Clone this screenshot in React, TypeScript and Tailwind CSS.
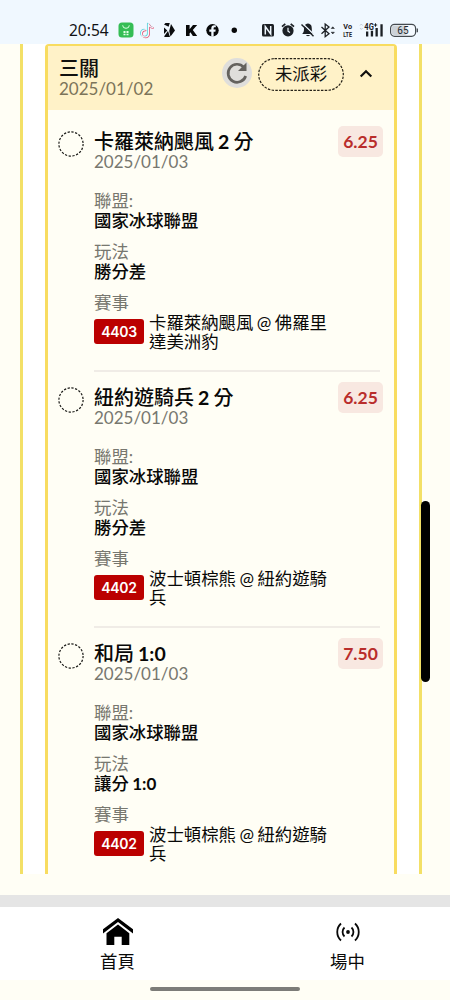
import React from "react";

const cjk = "font-['Lato','Noto_Sans_CJK_TC',sans-serif]";

type Leg = { name: string; figure: string; odds: string; play: string; playFigure?: string; code: string; match: string[] };

const legs: Leg[] = [
  { name: "卡羅萊納颶風", figure: "2", odds: "6.25", play: "勝分差", code: "4403", match: ["卡羅萊納颶風 @ 佛羅里", "達美洲豹"] },
  { name: "紐約遊騎兵", figure: "2", odds: "6.25", play: "勝分差", code: "4402", match: ["波士頓棕熊 @ 紐約遊騎", "兵"] },
  { name: "和局", figure: "1:0", odds: "7.50", play: "讓分", playFigure: "1:0", code: "4402", match: ["波士頓棕熊 @ 紐約遊騎", "兵"] },
];

function StatusIcons() {
  return (
    <svg width="342" height="20" viewBox="108 20 342 20" className="block shrink-0">
      {/* shopping bag app */}
      <rect x="118.5" y="22.5" width="15" height="15" rx="3.5" fill="#35bd55" />
      <path d="M122.7 25.3a3.3 3 0 0 0 6.6 0" fill="none" stroke="#d9ffe0" strokeWidth="1" />
      <path d="M123.5 31h2v2h-2zM126.500 31h2v2h-2zM123.500 33.700h2v1.500h-2zM126.500 33.700h2v1.500h-2z" fill="#e4ffe8" />
      {/* music note app */}
      <g fill="none" strokeWidth="1.500" strokeLinecap="round">
        <path d="M148.500 24v9.500a3.500 3.500 0 1 1-3.500-3.500M148.500 24c.4 2.200 1.800 3.300 4 3.500" stroke="#69d5de" transform="translate(-.8 -.5)" />
        <path d="M148.500 24v9.500a3.500 3.500 0 1 1-3.500-3.500M148.500 24c.4 2.200 1.800 3.300 4 3.500" stroke="#e2607f" transform="translate(.7 .5)" />
        <path d="M148.500 24v9.500a3.500 3.500 0 1 1-3.500-3.500M148.500 24c.4 2.200 1.800 3.300 4 3.500" stroke="#f5faff" strokeWidth="1.200" />
      </g>
      {/* angular mark */}
      <path d="M164 24.500l1.500-1.500h4.300l-1.200 3.700zM164 36.500l4-5.500 2 6h-5zM164 27.500l3.300 3-3.300 3.500zM171 24l4 6.400-4.500 6.100-1.300-5.500z" fill="#0b0d0f" />
      <path d="M186 25h3.600v4.300l3.400-4.300h4.200l-4.400 5.100 4.400 5.900h-4.300l-2.500-3.700-.8.900v2.800H186z" fill="#08090a" />
      <circle cx="212.500" cy="30.300" r="6.200" fill="#08090a" />
      <path d="M211.300 36.800v-5h-2v-2.200h2v-1c0-2.200 1-3.300 3-3.300h1.500v2h-1c-.9 0-1.200.4-1.200 1.200v1.100h2.100l-.3 2.200h-1.800v5z" fill="#f0f8ff" />
      <circle cx="234.300" cy="30.300" r="2.700" fill="#08090a" />
      {/* nfc */}
      <rect x="262" y="24" width="12" height="12.500" rx="1.500" fill="#1c2025" />
      <path d="M265.300 34.500V26.500l5.400 7.500V26" fill="none" stroke="#f0f8ff" strokeWidth="1.500" />
      {/* alarm */}
      <circle cx="288" cy="30.800" r="5.600" fill="#1c2025" />
      <path d="M282 26.700l3.300-2.900M294 26.700l-3.300-2.900" stroke="#1c2025" strokeWidth="1.700" />
      <path d="M288 27.700v3.500l2 1.300" stroke="#f0f8ff" strokeWidth="1.200" fill="none" />
      {/* muted bell */}
      <path d="M308 23.500c-3.500.5-4 3-4 5.500 0 3-.6 3.500-1.800 5h11.300c-1.300-1.500-1.700-2.500-1.700-5 0-3-.5-5-3.800-5.500zM306 35h4c-.5 1.500-3.500 1.500-4 0z" fill="#1c2025" />
      <path d="M302.500 23.500l12 11.500" stroke="#f0f8ff" strokeWidth="1.300" />
      <path d="M301.500 24.500l12 11.800" stroke="#1c2025" strokeWidth="1.400" />
      {/* bluetooth */}
      <path d="M321.500 27l7.500 6.700-3.800 3V24l3.800 3-7.500 6.700" fill="none" stroke="#1c2025" strokeWidth="1.300" />
      <path d="M331.200 28.500l1.600-1.700 1.600 1.700zM331.200 32.200h3.200l-1.600 1.700z" fill="#1c2025" stroke="#1c2025" strokeWidth=".5" />
      <g fill="#1c2025" className="font-['Roboto',sans-serif] font-bold">
        <text x="343.300" y="29" fontSize="7" textLength="8.700" lengthAdjust="spacingAndGlyphs">Vo</text>
        <text x="343.300" y="36.700" fontSize="7" textLength="8.700" lengthAdjust="spacingAndGlyphs">LTE</text>
        <text x="364.300" y="29.500" fontSize="9" textLength="9.500" lengthAdjust="spacingAndGlyphs">4G</text>
      </g>
      <path d="M373.800 25h3.400M375.500 23.300v3.400" stroke="#1c2025" strokeWidth="1" />
      <path d="M360 25.500l1.300-1.500 1.300 1.500M360 28l1.300 1.500 1.300-1.500" fill="none" stroke="#bbc2c8" strokeWidth=".8" />
      <path d="M366 31.500h2.300v5H366zM370.800 30.800h2.300v5.700h-2.300zM375.500 28h2.300v8.500h-2.300zM380.400 24.200h2.300v12.300h-2.300z" fill="#1c2025" />
      {/* battery */}
      <rect x="390.600" y="24.300" width="25" height="12" rx="4" fill="#f5faff" stroke="#444a4f" strokeWidth="1.200" />
      <rect x="391.800" y="25.500" width="15" height="9.600" rx="2.500" fill="#ccd2d8" />
      <path d="M417.300 28.500v3.800" stroke="#444a4f" strokeWidth="1.300" />
      <text x="397.300" y="34" fontSize="10" fill="#252a2e" className="font-['Roboto',sans-serif]">65</text>
    </svg>
  );
}

function DashedCircle() {
  return (
    <svg width="26" height="26" viewBox="0 0 26 26" className="block shrink-0">
      <circle cx="13" cy="13" r="12.100" fill="none" stroke="#1b1b18" strokeWidth="1.200" strokeDasharray="2.3 1.500" />
    </svg>
  );
}

function LegRow({ leg, last }: { leg: Leg; last: boolean }) {
  return (
    <section className="flex h-[256px] shrink-0 pt-4 pl-[10px]">
      <DashedCircle />
      <div className={"ml-[10px] flex h-[241px] w-[286px] flex-col text-[17.4px] leading-5 " + (last ? "" : "border-b-2 border-[#f0ece6]")}>
        <div className="relative flex">
          <h2 className="h-[21px] text-[20px] leading-[21px] font-medium whitespace-nowrap text-[#080807] [word-spacing:-1px]">
            {leg.name} <span className="text-[19.500px] font-bold">{leg.figure}</span>{leg.figure === "2" ? " 分" : ""}
          </h2>
          <span className="absolute -top-[5px] -right-[3px] flex h-[31px] w-[45px] items-center justify-center rounded-[5px] bg-[#f8e8e1] text-[17.500px] font-bold text-[#b92d2b]">{leg.odds}</span>
        </div>
        <p className="text-[17px] text-[#77776f]">2025/01/03</p>
        <p className="mt-[19px] text-[#77776f]">聯盟:</p>
        <p className="font-medium text-[#080807]">國家冰球聯盟</p>
        <p className="mt-[11px] text-[#77776f]">玩法</p>
        <p className="font-medium text-[#080807] [word-spacing:-1px]">
          {leg.play}{leg.playFigure && <> <span className="text-[17px] font-bold">{leg.playFigure}</span></>}
        </p>
        <p className="mt-[11px] text-[#77776f]">賽事</p>
        <div className="flex items-start">
          <span className="mt-[6px] flex h-[25px] w-[50px] shrink-0 items-center justify-center rounded-[3px] bg-[#bb0000] font-['Inter',sans-serif] text-[14px] font-semibold tracking-[-0.3px] text-white">{leg.code}</span>
          <p className="ml-[5px] leading-[19px] whitespace-nowrap text-[#080807] [word-spacing:-1px]">
            {leg.match[0]}<br />{leg.match[1]}
          </p>
        </div>
      </div>
    </section>
  );
}

export default function App() {
  return (
    <div className={"relative flex h-[1000px] w-[450px] flex-col overflow-hidden bg-[#fffef5] " + cjk}>
      <header className="flex h-11 shrink-0 items-end bg-[#f0f8ff] pb-1">
        <time className="w-[108px] pl-[69px] font-['Noto_Sans',sans-serif] text-[15.500px] leading-5 text-[#101214]">20:54</time>
        <StatusIcons />
      </header>

      <main className="flex h-[830px] shrink-0 px-5">
        <div className="flex w-[402px] shrink-0 border-x-[3px] border-[#f3e067] bg-white pr-[22px] pl-[22px]">
          <article className="flex w-full flex-col overflow-hidden rounded-t-[4px] border-x-[3px] border-t-2 border-[#f8dc60] bg-[#fffef5]">
            <div className="flex h-[64px] shrink-0 bg-[#fff2c8] pl-[11px]">
              <div className="w-[163px] pt-[12px]">
                <h1 className="h-[21px] text-[20px] leading-[21px] font-medium text-[#11110f]">三關</h1>
                <p className="text-[17px] leading-5 text-[#7c7459]">2025/01/02</p>
              </div>
              <span className="mt-[11.500px] flex h-[30px] w-[30px] items-center justify-center rounded-full bg-[#dfdedb]">
                <svg width="24" height="24" viewBox="0 0 24 24" fill="none">
                  <path d="M18.800 6.200A9 9 0 1 0 20.700 15" stroke="#64625e" strokeWidth="2.700" />
                  <path d="M21.500 1.500V10h-8.500z" fill="#64625e" />
                </svg>
              </span>
              <span className="relative mt-[12px] ml-[6px] flex h-[33px] w-[86px] items-center justify-center text-[17.400px] text-[#11110f]">
                <svg className="absolute inset-0" width="86" height="33" viewBox="0 0 86 33">
                  <rect x=".7" y=".7" width="84.600" height="31.600" rx="15.800" fill="none" stroke="#252117" strokeWidth="1.200" strokeDasharray="2.500 1.300" />
                </svg>
                未派彩
              </span>
              <svg className="mt-[21.500px] ml-[15px]" width="14" height="11" viewBox="0 0 14 11">
                <path d="M1.700 8.500L7 3.200l5.300 5.300" fill="none" stroke="#11110f" strokeWidth="2.200" />
              </svg>
            </div>
            <div className="flex flex-col pt-[5px]">
              {legs.map((leg, i) => <LegRow key={i} leg={leg} last={i === 2} />)}
            </div>
          </article>
        </div>
      </main>

      <div className="mt-[21px] h-3 shrink-0 bg-[#e5e5e5]" />
      <nav className="flex h-[73px] shrink-0 bg-white text-[17.400px] text-[#090909]">
        <a className="flex w-[235px] shrink-0 flex-col items-center pt-[10px]">
          <svg width="32" height="29" viewBox="0 0 32 29">
            <path d="M1 12.200L16 1l15 11.200v4.300L16 5 1 16.500z" fill="#000" />
            <path d="M4.500 16.200L16 7.500l11.300 8.700V28h-7.600v-8.300h-7.400V28H4.500z" fill="#000" />
          </svg>
          <span className="mt-[6px] leading-5">首頁</span>
        </a>
        <a className="flex w-[225px] shrink-0 flex-col items-center pt-[15px]">
          <svg width="24" height="20" viewBox="0 0 24 20" fill="none" stroke="#090909" strokeWidth="1.800">
            <circle cx="12" cy="10" r="1.900" fill="#090909" stroke="none" />
            <path d="M8.500 5.500a6.200 6.200 0 0 0 0 9M15.500 5.500a6.200 6.200 0 0 1 0 9M5 1.500a11.500 11.500 0 0 0 0 17M19 1.500a11.500 11.500 0 0 1 0 17" />
          </svg>
          <span className="mt-[10px] leading-5">場中</span>
        </a>
      </nav>
      <footer className="flex h-5 shrink-0 justify-center pt-[7px]">
        <div className="h-[4px] w-[150px] rounded-full bg-[#7c7c78]" />
      </footer>
      <div className="absolute top-[501px] left-[421px] h-[181px] w-[9px] rounded-full bg-black" />
    </div>
  );
}
